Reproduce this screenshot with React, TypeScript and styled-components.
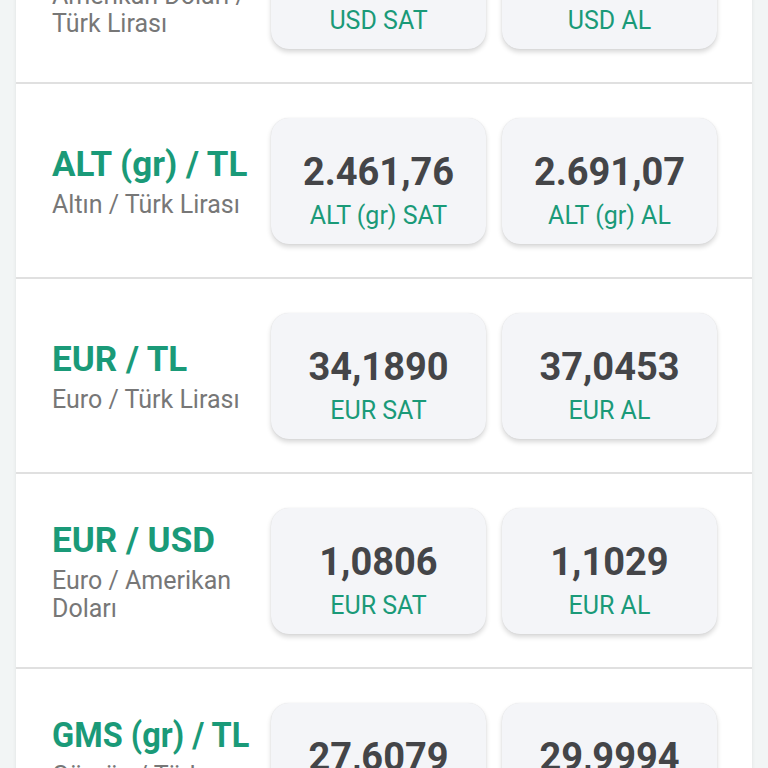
import React from "react";
import styled, { createGlobalStyle } from "styled-components";

const Global = createGlobalStyle`
  html, body { margin: 0; padding: 0; background: #f2f5f5; }
  body { font-family: Roboto, "Noto Sans", "Liberation Sans", sans-serif; overflow: hidden; }
  * { box-sizing: border-box; }
`;

const Page = styled.div`
  width: 768px;
  height: 768px;
  overflow: hidden;
  background: #f2f5f5;
`;

const Sheet = styled.div`
  margin: -111px 16px 0 16px;
  background: #ffffff;
  box-shadow: 0 0 4px rgba(0, 0, 0, 0.08);
`;

const Row = styled.div`
  display: flex;
  align-items: center;
  height: 195px;
  padding: 0 34px 0 36px;
  border-bottom: 2px solid #e0e0e0;
`;

const Info = styled.div`
  width: 203px;
  margin-right: 16px;
  display: flex;
  flex-direction: column;
`;

const Title = styled.div<{ $squeeze?: number }>`
  color: #1a9a78;
  font-weight: 700;
  font-size: 35px;
  line-height: 40px;
  margin-top: 2px;
  white-space: nowrap;
  transform-origin: left center;
  transform: scaleX(${(p) => p.$squeeze ?? 1});
`;

const Subtitle = styled.div`
  color: #777777;
  font-size: 25px;
  line-height: 28px;
  margin-top: 6px;
`;

const Buttons = styled.div`
  display: flex;
  gap: 16px;
`;

const PriceButton = styled.div`
  width: 215px;
  height: 126px;
  border-radius: 18px;
  background: #f4f5f8;
  box-shadow: 0 3px 5px rgba(0, 0, 0, 0.16), 0 0 1px rgba(0, 0, 0, 0.12);
  display: flex;
  flex-direction: column;
  align-items: center;
  justify-content: center;
  padding-top: 19px;
`;

const Value = styled.div`
  color: #444548;
  font-weight: 700;
  font-size: 38px;
  line-height: 44px;
`;

const Label = styled.div`
  color: #1a9a78;
  font-size: 25px;
  line-height: 30px;
  margin-top: 7px;
`;

type Item = {
  title: string;
  subtitle: string;
  code: string;
  sell: string;
  buy: string;
  squeeze?: number;
};

const items: Item[] = [
  { title: "USD / TL", subtitle: "Amerikan Doları / Türk Lirası", code: "USD", sell: "32,3160", buy: "34,2510" },
  { title: "ALT (gr) / TL", subtitle: "Altın / Türk Lirası", code: "ALT (gr)", sell: "2.461,76", buy: "2.691,07" },
  { title: "EUR / TL", subtitle: "Euro / Türk Lirası", code: "EUR", sell: "34,1890", buy: "37,0453" },
  { title: "EUR / USD", subtitle: "Euro / Amerikan Doları", code: "EUR", sell: "1,0806", buy: "1,1029" },
  { title: "GMS (gr) / TL", subtitle: "Gümüş / Türk Lirası", code: "GMS (gr)", sell: "27,6079", buy: "29,9994", squeeze: 0.93 },
];

export default function App() {
  return (
    <Page>
      <Global />
      <Sheet>
        {items.map((it, i) => (
          <Row key={i}>
            <Info>
              <Title $squeeze={it.squeeze}>{it.title}</Title>
              <Subtitle>{it.subtitle}</Subtitle>
            </Info>
            <Buttons>
              <PriceButton>
                <Value>{it.sell}</Value>
                <Label>{it.code} SAT</Label>
              </PriceButton>
              <PriceButton>
                <Value>{it.buy}</Value>
                <Label>{it.code} AL</Label>
              </PriceButton>
            </Buttons>
          </Row>
        ))}
      </Sheet>
    </Page>
  );
}
